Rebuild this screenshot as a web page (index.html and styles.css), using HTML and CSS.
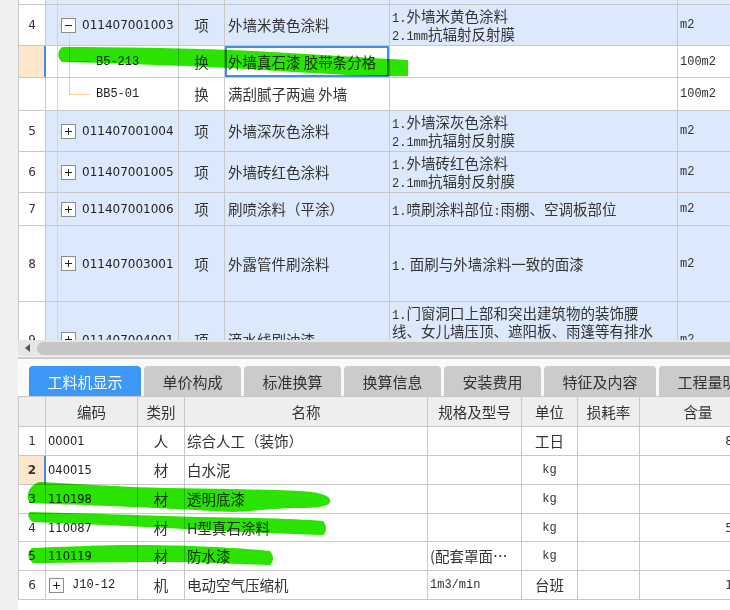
FILE: index.html
```html
<!DOCTYPE html>
<html lang="zh-CN">
<head>
<meta charset="utf-8">
<title>工料机显示</title>
<link rel="stylesheet" href="styles.css">
</head>
<body>
<div class="app">
  <aside class="side"></aside>
  <main class="main">
    <section class="bill">
      <div class="row h5 item">
        <div class="c num"></div><div class="c code tree stem"></div><div class="c type"></div><div class="c name"></div><div class="c feat"></div><div class="c unit"></div>
      </div>
      <div class="row h41 item">
        <div class="c num">4</div>
        <div class="c code tree open"><svg class="tg" width="15" height="15" viewBox="0 0 15 15"><rect x="0.5" y="0.5" width="14" height="14" fill="#fff" stroke="#8c8c8c"/><path d="M4 7.5h7" stroke="#222"/></svg><span class="cd">011407001003</span></div>
        <div class="c type">项</div>
        <div class="c name">外墙米黄色涂料</div>
        <div class="c feat"><div class="txt"><span class="asc">1.</span>外墙米黄色涂料<br><span class="asc">2.1mm</span>抗辐射反射膜</div></div>
        <div class="c unit">m2</div>
      </div>
      <div class="row h32 sub sel">
        <div class="c num"></div>
        <div class="c code tree mid"><span class="sc">B5-213</span></div>
        <div class="c type">换</div>
        <div class="c name focus">外墙真石漆 胶带条分格</div>
        <div class="c feat"></div>
        <div class="c unit">100m2</div>
      </div>
      <div class="row h33 sub">
        <div class="c num"></div>
        <div class="c code tree last"><span class="sc">BB5-01</span></div>
        <div class="c type">换</div>
        <div class="c name">满刮腻子两遍 外墙</div>
        <div class="c feat"></div>
        <div class="c unit">100m2</div>
      </div>
      <div class="row h41 item">
        <div class="c num">5</div>
        <div class="c code tree"><svg class="tg" width="15" height="15" viewBox="0 0 15 15"><rect x="0.5" y="0.5" width="14" height="14" fill="#fff" stroke="#8c8c8c"/><path d="M4 7.5h7M7.5 4v7" stroke="#222"/></svg><span class="cd">011407001004</span></div>
        <div class="c type">项</div>
        <div class="c name">外墙深灰色涂料</div>
        <div class="c feat"><div class="txt"><span class="asc">1.</span>外墙深灰色涂料<br><span class="asc">2.1mm</span>抗辐射反射膜</div></div>
        <div class="c unit">m2</div>
      </div>
      <div class="row h41 item">
        <div class="c num">6</div>
        <div class="c code tree"><svg class="tg" width="15" height="15" viewBox="0 0 15 15"><rect x="0.5" y="0.5" width="14" height="14" fill="#fff" stroke="#8c8c8c"/><path d="M4 7.5h7M7.5 4v7" stroke="#222"/></svg><span class="cd">011407001005</span></div>
        <div class="c type">项</div>
        <div class="c name">外墙砖红色涂料</div>
        <div class="c feat"><div class="txt"><span class="asc">1.</span>外墙砖红色涂料<br><span class="asc">2.1mm</span>抗辐射反射膜</div></div>
        <div class="c unit">m2</div>
      </div>
      <div class="row h33 item">
        <div class="c num">7</div>
        <div class="c code tree"><svg class="tg" width="15" height="15" viewBox="0 0 15 15"><rect x="0.5" y="0.5" width="14" height="14" fill="#fff" stroke="#8c8c8c"/><path d="M4 7.5h7M7.5 4v7" stroke="#222"/></svg><span class="cd">011407001006</span></div>
        <div class="c type">项</div>
        <div class="c name">刷喷涂料（平涂）</div>
        <div class="c feat"><div class="txt"><span class="asc">1.</span>喷刷涂料部位<span class="asc">:</span>雨棚、空调板部位</div></div>
        <div class="c unit">m2</div>
      </div>
      <div class="row h76 item">
        <div class="c num">8</div>
        <div class="c code tree"><svg class="tg" width="15" height="15" viewBox="0 0 15 15"><rect x="0.5" y="0.5" width="14" height="14" fill="#fff" stroke="#8c8c8c"/><path d="M4 7.5h7M7.5 4v7" stroke="#222"/></svg><span class="cd">011407003001</span></div>
        <div class="c type">项</div>
        <div class="c name">外露管件刷涂料</div>
        <div class="c feat"><div class="txt"><span class="asc">1.</span> 面刷与外墙涂料一致的面漆</div></div>
        <div class="c unit">m2</div>
      </div>
      <div class="row h76 item">
        <div class="c num">9</div>
        <div class="c code tree"><svg class="tg" width="15" height="15" viewBox="0 0 15 15"><rect x="0.5" y="0.5" width="14" height="14" fill="#fff" stroke="#8c8c8c"/><path d="M4 7.5h7M7.5 4v7" stroke="#222"/></svg><span class="cd">011407004001</span></div>
        <div class="c type">项</div>
        <div class="c name">滴水线刷油漆</div>
        <div class="c feat"><div class="txt"><span class="asc">1.</span>门窗洞口上部和突出建筑物的装饰腰<br>线、女儿墙压顶、遮阳板、雨篷等有排水<br>要求的部位做滴水线<br><span class="asc">2.</span>刷油漆</div></div>
        <div class="c unit">m2</div>
      </div>
    </section>

    <div class="hscroll"><span class="arrow"></span><span class="thumb"></span></div>
    <div class="split"></div>

    <nav class="tabs">
      <span class="tab active w112">工料机显示</span>
      <span class="tab w97">单价构成</span>
      <span class="tab w97">标准换算</span>
      <span class="tab w97">换算信息</span>
      <span class="tab w97">安装费用</span>
      <span class="tab w112">特征及内容</span>
      <span class="tab w112">工程量明细</span>
    </nav>

    <section class="res">
      <div class="mrow mhead h31">
        <div class="c num"></div>
        <div class="c">编码</div>
        <div class="c">类别</div>
        <div class="c">名称</div>
        <div class="c">规格及型号</div>
        <div class="c">单位</div>
        <div class="c">损耗率</div>
        <div class="c">含量</div>
      </div>
      <div class="mrow h29">
        <div class="c num">1</div>
        <div class="c mcode">00001</div>
        <div class="c mtype">人</div>
        <div class="c mname">综合人工（装饰）</div>
        <div class="c mspec"></div>
        <div class="c munit cj">工日</div>
        <div class="c"></div>
        <div class="c qty">8.84</div>
      </div>
      <div class="mrow h29 sel">
        <div class="c num"><b>2</b></div>
        <div class="c mcode">040015</div>
        <div class="c mtype">材</div>
        <div class="c mname">白水泥</div>
        <div class="c mspec"></div>
        <div class="c munit">kg</div>
        <div class="c"></div>
        <div class="c qty">0.2</div>
      </div>
      <div class="mrow h29">
        <div class="c num">3</div>
        <div class="c mcode">110198</div>
        <div class="c mtype">材</div>
        <div class="c mname">透明底漆</div>
        <div class="c mspec"></div>
        <div class="c munit">kg</div>
        <div class="c"></div>
        <div class="c qty">0.3</div>
      </div>
      <div class="mrow h28">
        <div class="c num">4</div>
        <div class="c mcode">110087</div>
        <div class="c mtype">材</div>
        <div class="c mname">H型真石涂料</div>
        <div class="c mspec"></div>
        <div class="c munit">kg</div>
        <div class="c"></div>
        <div class="c qty">5.25</div>
      </div>
      <div class="mrow h29">
        <div class="c num">5</div>
        <div class="c mcode">110119</div>
        <div class="c mtype">材</div>
        <div class="c mname">防水漆</div>
        <div class="c mspec cj">(配套罩面…</div>
        <div class="c munit">kg</div>
        <div class="c"></div>
        <div class="c qty">0.4</div>
      </div>
      <div class="mrow h29">
        <div class="c num">6</div>
        <div class="c mcode tgcode"><svg class="tg" width="15" height="15" viewBox="0 0 15 15"><rect x="0.5" y="0.5" width="14" height="14" fill="#fff" stroke="#8c8c8c"/><path d="M4 7.5h7M7.5 4v7" stroke="#222"/></svg><span class="sc">J10-12</span></div>
        <div class="c mtype">机</div>
        <div class="c mname">电动空气压缩机</div>
        <div class="c mspec">1m3/min</div>
        <div class="c munit cj">台班</div>
        <div class="c"></div>
        <div class="c qty">1.32</div>
      </div>
    </section>
  </main>
</div>

<svg class="marker" width="730" height="610" viewBox="0 0 730 610">
  <path d="M62,47 C120,47 180,48 230,50 C300,53 360,58 408,60 L408,76 C360,77 300,72 230,68 C180,66 120,63 62,62 C57,58 57,51 62,47 Z"/>
  <path d="M40,482 C80,484 110,486 133,487 C200,489 250,489 300,491 C320,492 332,496 330,502 C328,507 315,508 300,508 C270,508 250,512 233,512 C190,510 160,508 133,507 C90,505 50,504 30,503 C24,496 30,484 40,482 Z"/>
  <path d="M30,512 C80,513 133,515 200,517 C260,518 300,519 323,521 C327,526 327,531 323,535 C260,533 200,530 167,528 C110,525 60,523 33,522 C28,519 27,514 30,512 Z"/>
  <path d="M32,548 C80,546 110,545 133,545 C190,545 240,548 270,551 C274,556 274,561 270,565 C230,564 200,562 167,562 C110,562 60,563 33,563 C27,558 27,552 32,548 Z"/>
</svg>
</body>
</html>
```

FILE: styles.css
```css
* { box-sizing: border-box; }
html, body { margin: 0; padding: 0; }
body {
  width: 730px;
  height: 610px;
  overflow: hidden;
  position: relative;
  background: #fff;
  color: #333;
  font-family: "Noto Sans CJK SC", sans-serif;
  font-size: 14.5px;
}

.app { display: flex; height: 610px; }
.side { width: 18px; flex: none; background: #f0f0f0; }
.main { flex: 1; min-width: 0; display: flex; flex-direction: column; overflow: hidden; background: #fff; }

/* ---------- upper bill grid ---------- */
.bill { height: 340px; flex: none; overflow: hidden; }
.row { display: grid; grid-template-columns: 28px 133px 46px 165px 288px 60px; }
.h5 { height: 5px; }
.h28 { height: 28px; }
.h29 { height: 29px; }
.h31 { height: 31px; }
.h32 { height: 32px; }
.h33 { height: 33px; }
.h41 { height: 41px; }
.h76 { height: 76px; }

.c {
  display: flex;
  align-items: center;
  overflow: hidden;
  white-space: nowrap;
  border-right: 1px solid #c8c8c8;
  border-bottom: 1px solid #c8c8c8;
  background-color: #fff;
  line-height: 18px;
}
.num {
  border-left: 1px solid #c8c8c8;
  justify-content: center;
  font-family: "DejaVu Sans", sans-serif;
  font-size: 12px;
  color: #333;
}
.item .c:not(.num) { background-color: #dce8fb; }

.code { padding-left: 15px; gap: 6px; }
.cd { font-family: "DejaVu Sans", sans-serif; font-size: 12px; color: #222; }
.sc { font-family: "Liberation Mono", monospace; font-size: 12px; color: #222; }
.sub .code { padding-left: 50px; }
.tg { flex: none; display: block; }

.tree {
  background-repeat: no-repeat;
  background-image: linear-gradient(#f9cd96, #f9cd96), linear-gradient(#f9cd96, #f9cd96);
  background-size: 1px 100%, 4px 1px;
  background-position: 11px 0, 11px 50%;
}
.tree.stem { background-size: 1px 100%, 0 0; }
.tree.open {
  background-image: linear-gradient(#f9cd96, #f9cd96), linear-gradient(#f9cd96, #f9cd96), linear-gradient(#f9cd96, #f9cd96);
  background-size: 1px 100%, 4px 1px, 1px 13px;
  background-position: 11px 0, 11px 50%, 23px 100%;
}
.tree.mid {
  background-image: linear-gradient(#f9cd96, #f9cd96), linear-gradient(#f9cd96, #f9cd96), linear-gradient(#f9cd96, #f9cd96);
  background-size: 1px 100%, 1px 100%, 21px 1px;
  background-position: 11px 0, 23px 0, 23px 50%;
}
.tree.last {
  background-image: linear-gradient(#f9cd96, #f9cd96), linear-gradient(#f9cd96, #f9cd96), linear-gradient(#f9cd96, #f9cd96);
  background-size: 1px 100%, 1px 50%, 21px 1px;
  background-position: 11px 0, 23px 0, 23px 50%;
}

.type { justify-content: center; }
.name { padding-left: 3px; }
.feat { padding-left: 2px; }
.txt { line-height: 18px; }
.asc { font-family: "Liberation Mono", monospace; font-size: 12px; line-height: 0; }
.unit { padding-left: 2px; font-family: "Liberation Mono", monospace; font-size: 12px; }

.sel .num {
  background-color: #fde6c9;
  border-right-color: #3f8de6;
  box-shadow: inset -1px 0 0 #3f8de6;
}
.focus { box-shadow: inset 0 0 0 2px #3f8de6; }

/* ---------- scrollbar / splitter ---------- */
.hscroll {
  height: 16px;
  flex: none;
  display: flex;
  align-items: center;
  gap: 7px;
  padding-left: 7px;
  background: #e6e6e6;
  overflow: hidden;
}
.arrow {
  flex: none;
  width: 0;
  height: 0;
  border-top: 4px solid transparent;
  border-bottom: 4px solid transparent;
  border-right: 5px solid #555;
}
.thumb {
  flex: none;
  width: 720px;
  height: 13px;
  border-radius: 7px;
  background: #c6c6c6;
}
.split {
  height: 3px;
  flex: none;
  background: #f4f4f4;
  border-bottom: 2px solid #cdcdcd;
}

/* ---------- tabs ---------- */
.tabs {
  flex: none;
  display: flex;
  gap: 3px;
  padding: 7px 0 0 11px;
  background: #fafafa;
  overflow: hidden;
}
.tab {
  flex: none;
  height: 30px;
  display: flex;
  align-items: center;
  justify-content: center;
  border-radius: 4px 4px 0 0;
  background: #cbcbcb;
  color: #333;
  font-size: 15px;
  white-space: nowrap;
}
.tab.active { background: #3d97f6; color: #fff; }
.w97 { width: 97px; }
.w112 { width: 112px; }

/* ---------- resource grid ---------- */
.res { flex: 1; overflow: hidden; background: #fff; }
.mrow { display: grid; grid-template-columns: 28px 92px 47px 243px 94px 56px 62px 117px; }
.mhead .c {
  background-color: #eeeeee;
  border-top: 1px solid #c8c8c8;
  justify-content: center;
}
.mcode { padding-left: 2px; font-family: "DejaVu Sans", sans-serif; font-size: 11.5px; color: #222; }
.tgcode { padding-left: 3px; gap: 8px; }
.mtype { justify-content: center; }
.mname { padding-left: 2px; }
.mspec { padding-left: 2px; font-family: "Liberation Mono", monospace; font-size: 12px; }
.munit { justify-content: center; font-family: "Liberation Mono", monospace; font-size: 12px; }
.cj { font-family: "Noto Sans CJK SC", sans-serif; font-size: 14.5px; }
.qty { justify-content: flex-end; padding-right: 4px; font-family: "DejaVu Sans", sans-serif; font-size: 12px; }

/* ---------- highlighter strokes ---------- */
.marker {
  position: absolute;
  left: 0;
  top: 0;
  pointer-events: none;
  mix-blend-mode: multiply;
  fill: #2be300;
}
```
